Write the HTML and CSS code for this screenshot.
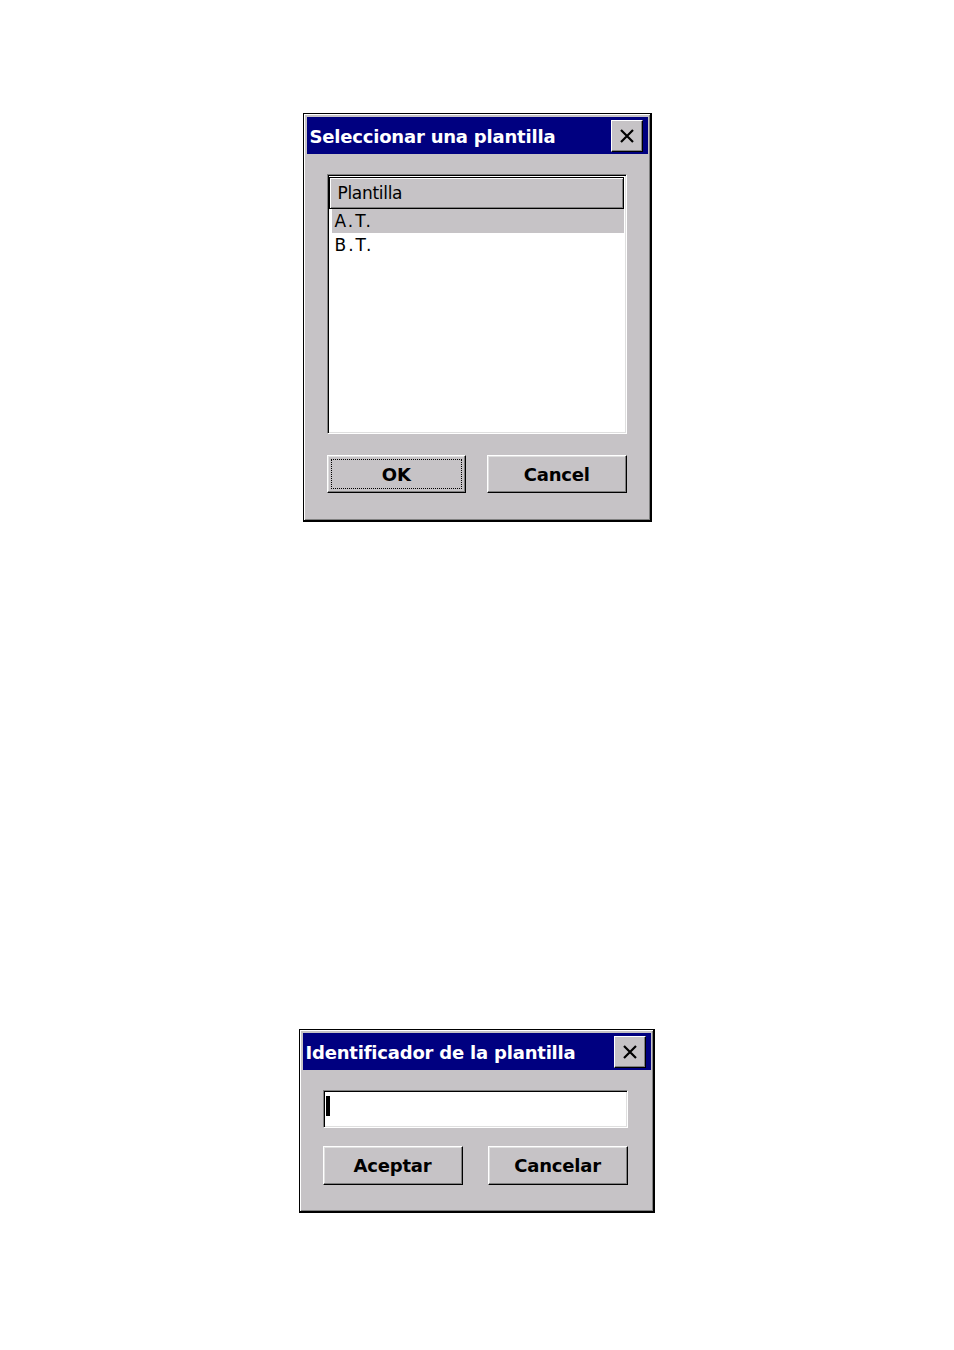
FILE: index.html
```html
<!DOCTYPE html>
<html>
<head>
<meta charset="utf-8">
<link rel="stylesheet" href="styles.css">
</head>
<body>
<div class="page">
  <div class="win win1">
    <div class="titlebar">
      <span class="title">Seleccionar una plantilla</span>
      <div class="close"><svg width="16" height="16" viewBox="0 0 16 16"><path d="M2 2 L14 14 M14 2 L2 14" stroke="#000" stroke-width="2.2" fill="none"/></svg></div>
    </div>
    <div class="body body1">
      <div class="listbox">
        <div class="lv-header"><span>Plantilla</span></div>
        <div class="row sel">A.T.</div>
        <div class="row">B.T.</div>
      </div>
      <div class="buttons buttons1">
        <div class="btn focus"><span class="focusrect">OK</span></div>
        <div class="btn">Cancel</div>
      </div>
    </div>
  </div>

  <div class="win win2">
    <div class="titlebar">
      <span class="title">Identificador de la plantilla</span>
      <div class="close"><svg width="16" height="16" viewBox="0 0 16 16"><path d="M2 2 L14 14 M14 2 L2 14" stroke="#000" stroke-width="2.2" fill="none"/></svg></div>
    </div>
    <div class="body body2">
      <div class="input"><span class="caret"></span></div>
      <div class="buttons buttons2">
        <div class="btn">Aceptar</div>
        <div class="btn">Cancelar</div>
      </div>
    </div>
  </div>
</div>
</body>
</html>
```
FILE: styles.css
```css
html, body {
  margin: 0;
  padding: 0;
  background: #fff;
}
.page {
  display: flex;
  flex-direction: column;
  align-items: center;
  padding-top: 113px;
  font-family: "DejaVu Sans", Verdana, sans-serif;
}
.win {
  box-sizing: border-box;
  background: #c6c3c6;
  border-style: solid;
  border-color: #000;
  border-width: 1px 2px 2px 1px;
  box-shadow: inset 1px 1px 0 #fff, inset -1px -1px 0 #808080;
  padding: 3px 2px 2px 3px;
  display: flex;
  flex-direction: column;
}
.win1 {
  width: 349px;
  height: 409px;
}
.win2 {
  width: 356px;
  height: 184px;
  margin-top: 507px;
  margin-left: -1px;
}
.titlebar {
  height: 37px;
  background: #000080;
  display: flex;
  align-items: center;
  justify-content: space-between;
  padding: 0 5px 0 3px;
  flex: none;
}
.title {
  color: #fff;
  font-weight: bold;
  font-size: 18px;
  letter-spacing: -0.2px;
  white-space: nowrap;
  margin-top: 1px;
}
.close {
  box-sizing: border-box;
  width: 32px;
  height: 32px;
  margin-top: 1px;
  background: #c6c3c6;
  border-style: solid;
  border-width: 1px;
  border-color: #fff #000 #000 #fff;
  box-shadow: inset -1px -1px 0 #808080;
  display: flex;
  align-items: center;
  justify-content: center;
}
.close svg {
  display: block;
}
.body1 {
  padding: 20px 20px 0 20px;
  display: flex;
  flex-direction: column;
}
.listbox {
  box-sizing: border-box;
  width: 300px;
  height: 260px;
  background: #fff;
  border-style: solid;
  border-width: 1px;
  border-color: #808080 #fff #fff #808080;
  box-shadow: inset 1px 1px 0 #000, inset -1px -1px 0 #dfdfdf;
  padding: 1px 2px 2px 1px;
  display: flex;
  flex-direction: column;
}
.lv-header {
  box-sizing: border-box;
  height: 32px;
  background: #c6c3c6;
  border: 1px solid #000;
  box-shadow: inset 1px 1px 0 #fff, inset -1px -1px 0 #808080;
  display: flex;
  align-items: center;
  padding-left: 8px;
  font-size: 17px;
  color: #000;
  letter-spacing: -0.3px;
  margin-top: 1px;
}
.row {
  height: 24px;
  line-height: 25px;
  font-size: 17px;
  padding-left: 3px;
  margin-left: 3px;
  color: #000;
  letter-spacing: 2px;
}
.row.sel {
  background: #c6c3c6;
}
.buttons {
  display: grid;
  grid-template-columns: 1fr 1fr;
}
.buttons1 {
  margin-top: 21px;
  column-gap: 21px;
  width: 300px;
}
.btn {
  box-sizing: border-box;
  height: 38px;
  background: #c6c3c6;
  border-style: solid;
  border-width: 1px;
  border-color: #fff #000 #000 #fff;
  box-shadow: inset -1px -1px 0 #808080, inset 1px 1px 0 #dfdfdf;
  display: flex;
  align-items: center;
  justify-content: center;
  font-weight: bold;
  font-size: 18px;
  letter-spacing: -0.2px;
  color: #000;
}
.btn.focus {
  padding: 3px;
}
.focusrect {
  box-sizing: border-box;
  width: 100%;
  height: 100%;
  border: 1px dotted #000;
  display: flex;
  align-items: center;
  justify-content: center;
}
.body2 {
  padding: 20px 22px 0 20px;
  display: flex;
  flex-direction: column;
}
.input {
  box-sizing: border-box;
  width: 305px;
  height: 38px;
  background: #fff;
  border-style: solid;
  border-width: 1px;
  border-color: #808080 #fff #fff #808080;
  box-shadow: inset 1px 1px 0 #000, inset -1px -1px 0 #dfdfdf;
  padding: 5px 0 0 2px;
}
.caret {
  display: block;
  width: 4px;
  height: 20px;
  background: #000;
}
.buttons2 {
  margin-top: 18px;
  column-gap: 25px;
  width: 305px;
}
.buttons2 .btn {
  height: 39px;
}
```
